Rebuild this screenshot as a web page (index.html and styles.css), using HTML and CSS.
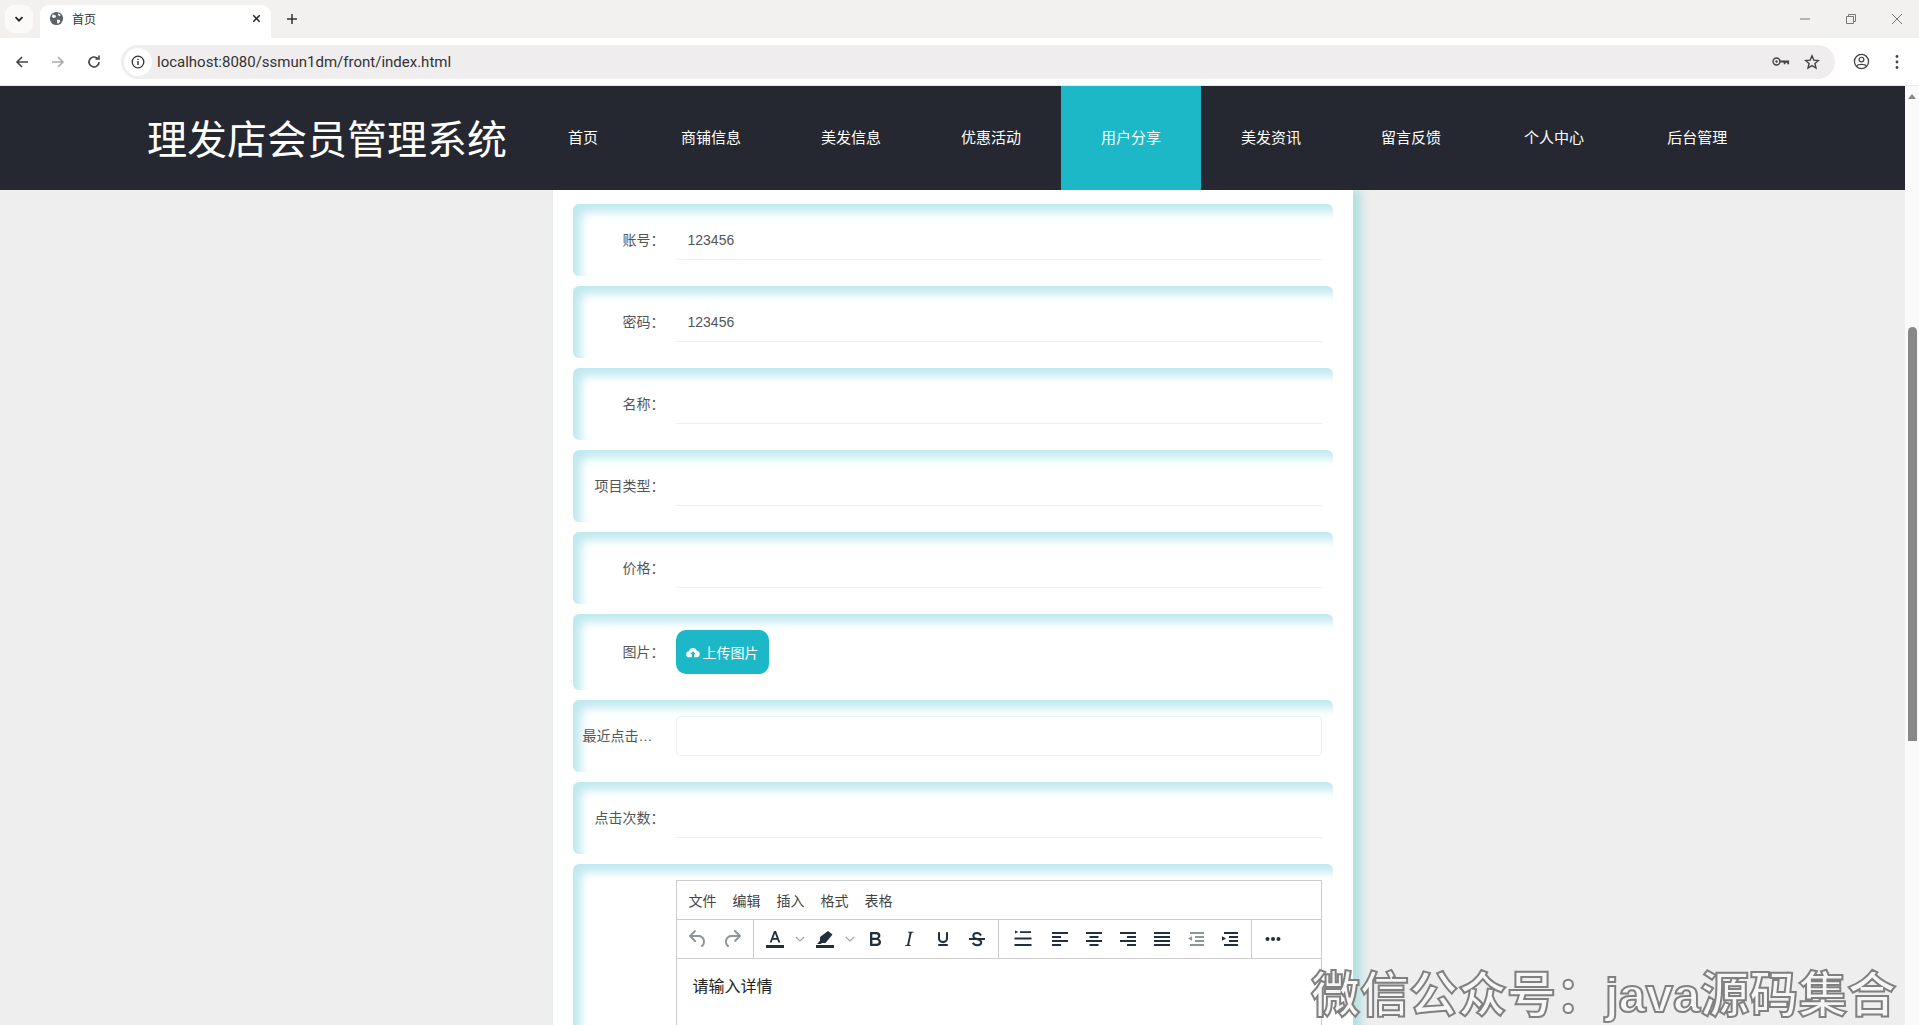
FILE: index.html
```html
<!DOCTYPE html>
<html lang="zh-CN">
<head>
<meta charset="utf-8">
<title>首页</title>
<link rel="stylesheet" href="styles.css">
</head>
<body>
<div class="browser">
  <div class="tabstrip">
    <button class="tab-search"><svg class="ic12" viewBox="0 0 12 12"><path d="M2.5 4.2 6 7.7l3.5-3.5" fill="none" stroke="#222" stroke-width="1.8"/></svg></button>
    <div class="tab">
      <svg class="favicon" viewBox="0 0 16 16"><circle cx="8" cy="8" r="7" fill="#5f6368"/><path d="M4 3.5 7.5 5 7 7 4.5 7.5 3 6ZM8.5 9l3 .5.5 2-2.5 2.3-1-1.8ZM10 2.5l2.5 2-1.5 1L9.500 4Z" fill="#fff"/></svg>
      <span class="tab-title">首页</span>
      <svg class="tab-close" viewBox="0 0 12 12"><path d="M2.500 2.500l7 7m0-7-7 7" stroke="#222" stroke-width="1.700" fill="none"/></svg>
    </div>
    <svg class="tab-new" viewBox="0 0 12 12"><path d="M6 1v10M1 6h10" stroke="#333" stroke-width="1.500" fill="none"/></svg>
    <div class="win-controls">
      <svg class="win-ic" viewBox="0 0 12 12"><path d="M1 6h10" stroke="#777" fill="none"/></svg>
      <svg class="win-ic" viewBox="0 0 12 12"><path d="M1.500 3.500h7v7h-7zM3.500 3.500v-2h7v7h-2" stroke="#777" fill="none"/></svg>
      <svg class="win-ic" viewBox="0 0 12 12"><path d="M1 1l10 10m0-10L1 11" stroke="#777" fill="none"/></svg>
    </div>
  </div>
  <div class="toolbar">
    <svg class="nav-ic" viewBox="0 0 16 16"><path d="M14 8H3M8 3 3 8l5 5" fill="none" stroke="#444" stroke-width="1.600"/></svg>
    <svg class="nav-ic" viewBox="0 0 16 16"><path d="M2 8h11M8 3l5 5-5 5" fill="none" stroke="#aaa" stroke-width="1.600"/></svg>
    <svg class="nav-ic" viewBox="0 0 16 16"><path d="M13 8a5 5 0 1 1-1.500-3.600M13 1.500v3.500H9.500" fill="none" stroke="#444" stroke-width="1.600"/></svg>
    <div class="omnibox">
      <span class="info-badge"><svg class="ic14" viewBox="0 0 14 14"><circle cx="7" cy="7" r="5.800" fill="none" stroke="#333" stroke-width="1.300"/><path d="M7 6v4M7 3.700v1.300" stroke="#333" stroke-width="1.400"/></svg></span>
      <span class="url">localhost:8080/ssmun1dm/front/index.html</span>
      <svg class="key-ic" viewBox="0 0 20 12"><circle cx="5" cy="6" r="3.800" fill="none" stroke="#444" stroke-width="1.600"/><circle cx="5" cy="6" r="1.300" fill="#444"/><path d="M9 5h10v4h-2V7.500h-2V9h-2V7H9z" fill="#444"/></svg>
      <svg class="star-ic" viewBox="0 0 16 16"><path d="m8 1.800 1.800 4.300 4.600.4-3.500 3 1.100 4.500L8 11.600 4 14l1.100-4.500-3.500-3 4.600-.4z" fill="none" stroke="#444" stroke-width="1.400"/></svg>
    </div>
    <svg class="profile-ic" viewBox="0 0 18 18"><circle cx="9" cy="9" r="7.500" fill="none" stroke="#444" stroke-width="1.400"/><circle cx="9" cy="7" r="2.500" fill="none" stroke="#444" stroke-width="1.300"/><path d="M4 14c1-2.500 9-2.500 10 0" fill="none" stroke="#444" stroke-width="1.300"/></svg>
    <svg class="dots-ic" viewBox="0 0 4 16"><circle cx="2" cy="2.500" r="1.400" fill="#444"/><circle cx="2" cy="8" r="1.400" fill="#444"/><circle cx="2" cy="13.500" r="1.400" fill="#444"/></svg>
  </div>
</div>

<div class="viewport">
  <div class="page">
    <header class="site-header">
      <h1 class="site-title">理发店会员管理系统</h1>
      <nav class="site-nav">
        <a class="nav-item nav-first">首页</a>
        <a class="nav-item">商铺信息</a>
        <a class="nav-item">美发信息</a>
        <a class="nav-item">优惠活动</a>
        <a class="nav-item nav-active">用户分享</a>
        <a class="nav-item">美发资讯</a>
        <a class="nav-item">留言反馈</a>
        <a class="nav-item nav-wide">个人中心</a>
        <a class="nav-item nav-wide">后台管理</a>
      </nav>
    </header>
    <main class="panel">
      <div class="form-row"><label class="form-label">账号：</label><div class="field">123456</div></div>
      <div class="form-row"><label class="form-label">密码：</label><div class="field">123456</div></div>
      <div class="form-row"><label class="form-label">名称：</label><div class="field"></div></div>
      <div class="form-row"><label class="form-label">项目类型：</label><div class="field"></div></div>
      <div class="form-row"><label class="form-label">价格：</label><div class="field"></div></div>
      <div class="form-row"><label class="form-label form-label-tall">图片：</label>
        <button class="upload-btn"><svg class="upload-ic" viewBox="0 0 16 12"><path d="M4 11.500a3.500 3.500 0 0 1-.5-7A4.700 4.700 0 0 1 12.500 4a3.800 3.800 0 0 1 0 7.500H9.300V8h2L8 4.500 4.700 8h2v3.500z" fill="#fff"/></svg>上传图片</button>
      </div>
      <div class="form-row"><label class="form-label form-label-left">最近点击…</label><div class="field field-boxed"></div></div>
      <div class="form-row"><label class="form-label">点击次数：</label><div class="field"></div></div>
      <div class="form-row form-row-editor"><label class="form-label"></label>
        <div class="editor">
          <div class="ed-menubar">
            <span class="ed-menu">文件</span><span class="ed-menu">编辑</span><span class="ed-menu">插入</span><span class="ed-menu">格式</span><span class="ed-menu">表格</span>
          </div>
          <div class="ed-toolbar">
            <div class="ed-group ed-group-history">
              <span class="ed-btn"><svg viewBox="0 0 24 24"><path fill="#8f959c" d="M6.400 8H12c3.700 0 6.200 2 6.800 5.100.6 2.700-.4 5.600-2.300 6.800a1 1 0 0 1-1-1.800c1.100-.6 1.800-2.700 1.400-4.600-.5-2.100-2.100-3.500-4.900-3.500H6.400l3.300 3.300a1 1 0 1 1-1.400 1.400l-5-5a1 1 0 0 1 0-1.400l5-5a1 1 0 0 1 1.400 1.400L6.400 8z"/></svg></span>
              <span class="ed-btn"><svg viewBox="0 0 24 24"><path fill="#8f959c" d="M17.600 10H12c-2.800 0-4.400 1.400-4.900 3.500-.4 2 .3 4 1.400 4.600a1 1 0 1 1-1 1.800c-2-1.200-2.900-4.100-2.300-6.800.6-3 3-5.100 6.800-5.100h5.600l-3.300-3.300a1 1 0 1 1 1.400-1.400l5 5a1 1 0 0 1 0 1.400l-5 5a1 1 0 0 1-1.400-1.400l3.300-3.300z"/></svg></span>
            </div>
            <div class="ed-group ed-group-format">
              <span class="ed-btn ed-btn-color"><svg viewBox="0 0 24 24"><path fill="#222f3e" d="M3 18h18v3H3z"/><path fill="#222f3e" d="M11 4h2l4.300 11.500h-2l-1-2.800H9.700l-1 2.800h-2zm-.7 7h3.400L12 6.400z"/></svg></span>
              <span class="ed-chev"><svg viewBox="0 0 10 10"><path d="M.8 3 5 7l4.200-4" fill="none" stroke="#a0a4a9" stroke-width="1.100"/></svg></span>
              <span class="ed-btn ed-btn-color"><svg viewBox="0 0 24 24"><path fill="#222f3e" d="M3 18h18v3H3z"/><path fill="#222f3e" d="M15 4l4.500 3.500-7 8.500H9l-1.300 1H4l3-3.200V10z"/></svg></span>
              <span class="ed-chev ed-chev-last"><svg viewBox="0 0 10 10"><path d="M.8 3 5 7l4.200-4" fill="none" stroke="#a0a4a9" stroke-width="1.100"/></svg></span>
              <span class="ed-btn"><svg viewBox="0 0 24 24"><path fill="#222f3e" d="M7.800 19c-.3 0-.5 0-.6-.2l-.2-.5V5.700c0-.2 0-.4.2-.5l.6-.2h5c1.500 0 2.700.3 3.500 1 .7.600 1.100 1.400 1.100 2.500a3 3 0 0 1-.6 1.900c-.4.600-1 1-1.600 1.200.4.100.9.300 1.300.6s.8.700 1 1.200c.4.400.5 1 .5 1.600 0 1.300-.4 2.300-1.300 3-.8.700-2.100 1-3.800 1H7.800zm5-8.300c.6 0 1.200-.1 1.600-.5.4-.3.600-.7.600-1.300 0-1.100-.8-1.700-2.300-1.700H9.300v3.500h3.500zm.5 6c.7 0 1.300-.1 1.700-.4.400-.4.600-.9.600-1.500s-.2-1-.7-1.400c-.4-.3-1-.4-2-.4H9.400v3.800h3.900z"/></svg></span>
              <span class="ed-btn"><svg viewBox="0 0 24 24"><path fill="#222f3e" d="M16.700 4.700l-.1.900h-.3c-.6 0-1 0-1.400.3-.3.300-.4.600-.5 1.100l-2.100 9.800v.6c0 .5.400.8 1.400.8h.2l-.2.800H8l.2-.8h.2c1.100 0 1.800-.5 2-1.500l2-9.800.1-.5c0-.6-.4-.8-1.400-.8h-.3l.2-.9h5.800z"/></svg></span>
              <span class="ed-btn"><svg viewBox="0 0 24 24"><path fill="#222f3e" d="M16 5c.6 0 1 .4 1 1v5.500a4 4 0 0 1-.4 1.800l-1 1.400a5.300 5.300 0 0 1-5.500 1 5 5 0 0 1-1.600-1c-.5-.4-.8-.9-1.100-1.400a4 4 0 0 1-.4-1.800V6c0-.6.400-1 1-1s1 .4 1 1v5.500c0 .3 0 .6.200 1l.6.700a3.300 3.300 0 0 0 2.200.8 3.400 3.400 0 0 0 2.200-.8c.3-.2.400-.5.600-.8l.2-.9V6c0-.6.400-1 1-1zM8 17h8c.6 0 1 .4 1 1s-.4 1-1 1H8a1 1 0 0 1 0-2z"/></svg></span>
              <span class="ed-btn"><svg viewBox="0 0 24 24"><path fill="#222f3e" d="M4 11h16v2H4z"/><path fill="none" stroke="#222f3e" stroke-width="2" d="M16 8.500C15.300 7.200 14 6 12 6c-2.400 0-3.700 1.300-3.700 2.900 0 1.800 1.700 2.500 3.700 3.100 2.300.7 4.200 1.500 4.200 3.300 0 1.700-1.500 2.900-4 2.900-2.300 0-3.700-1.200-4.400-2.500"/></svg></span>
            </div>
            <div class="ed-group ed-group-align">
              <span class="ed-btn"><svg viewBox="0 0 24 24"><path fill="#222f3e" d="M4 3.500 7.500 5 4 6.500zM9 4.200h11v1.700H9zM3.500 10.500h17v2h-17zM3.500 17h17v2h-17z"/></svg></span>
              <span class="ed-btn ed-btn-first"><svg viewBox="0 0 24 24"><path fill="#222f3e" d="M4 5h16v2H4zM4 9h9v2H4zM4 13h16v2H4zM4 17h9v2H4z"/></svg></span>
              <span class="ed-btn"><svg viewBox="0 0 24 24"><path fill="#222f3e" d="M4 5h16v2H4zM7.500 9h9v2h-9zM4 13h16v2H4zM7.500 17h9v2h-9z"/></svg></span>
              <span class="ed-btn"><svg viewBox="0 0 24 24"><path fill="#222f3e" d="M4 5h16v2H4zM11 9h9v2h-9zM4 13h16v2H4zM11 17h9v2h-9z"/></svg></span>
              <span class="ed-btn"><svg viewBox="0 0 24 24"><path fill="#222f3e" d="M4 5h16v2H4zM4 9h16v2H4zM4 13h16v2H4zM4 17h16v2H4z"/></svg></span>
              <span class="ed-btn"><svg viewBox="0 0 24 24"><path fill="#8f959c" d="M6 5h14v2H6zM11 9h9v2h-9zM11 13h9v2h-9zM6 17h14v2H6zM8 9.200v4.600L4 11.500z"/></svg></span>
              <span class="ed-btn"><svg viewBox="0 0 24 24"><path fill="#222f3e" d="M6 5h14v2H6zM11 9h9v2h-9zM11 13h9v2h-9zM6 17h14v2H6zM4 9.200v4.600l4-2.300z"/></svg></span>
            </div>
            <div class="ed-group ed-group-more">
              <span class="ed-btn"><svg viewBox="0 0 24 24"><circle cx="6.500" cy="12" r="2" fill="#222f3e"/><circle cx="12" cy="12" r="2" fill="#222f3e"/><circle cx="17.500" cy="12" r="2" fill="#222f3e"/></svg></span>
            </div>
          </div>
          <div class="ed-body">请输入详情</div>
        </div>
      </div>
    </main>
  </div>
  <aside class="scrollbar">
    <div class="sb-up"></div>
    <div class="sb-thumb"></div>
  </aside>
</div>
<div class="watermark">微信公众号：java源码集合</div>
</body>
</html>
```

FILE: styles.css
```css
* { box-sizing: border-box; }
html, body { margin: 0; height: 1025px; overflow: hidden; }
body {
  width: 1919px;
  position: relative;
  display: flex;
  flex-direction: column;
  background: #eeeeee;
  font-family: "Liberation Sans", "Noto Sans CJK SC", sans-serif;
  font-size: 14px;
  color: #444;
}
svg { display: block; }

/* browser chrome */
.browser { flex: none; height: 86px; background: #fff; border-bottom: 1px solid #e8e8e8; }
.tabstrip { height: 38px; background: #f3f1ef; display: flex; align-items: flex-start; padding-left: 5px; position: relative; }
.tab-search { width: 28px; height: 28px; margin-top: 5px; border: 0; padding: 0; border-radius: 9px; background: #fbfaf9; display: flex; align-items: center; justify-content: center; }
.ic12 { width: 12px; height: 12px; }
.tab { width: 231px; height: 33px; margin: 5px 0 0 7px; background: #fff; border-radius: 9px 9px 0 0; display: flex; align-items: center; padding: 0 9px 6px 9px; }
.favicon { width: 15px; height: 15px; flex: none; }
.tab-title { margin-left: 8px; font-size: 12px; line-height: 16px; color: #333; flex: 1; font-family: "Noto Sans CJK SC", sans-serif; }
.tab-close { width: 11px; height: 11px; }
.tab-new { width: 12px; height: 12px; margin: 13px 0 0 15px; }
.win-controls { margin-left: auto; margin-top: 13px; display: flex; gap: 34px; padding-right: 16px; }
.win-ic { width: 12px; height: 12px; }

.toolbar { height: 47px; display: flex; align-items: center; padding-left: 14px; }
.nav-ic { width: 16px; height: 16px; margin-right: 20px; flex: none; }
.omnibox { flex: none; width: 1714px; height: 34px; margin-left: -1px; border-radius: 17px; background: #efedee; display: flex; align-items: center; padding-left: 3px; }
.info-badge { width: 28px; height: 28px; border-radius: 50%; background: #fff; display: flex; align-items: center; justify-content: center; }
.ic14 { width: 14px; height: 14px; }
.url { margin-left: 5px; font-size: 15px; color: #333; font-family: "Roboto", sans-serif; flex: 1; }
.key-ic { width: 18px; height: 11px; margin-right: 14px; }
.star-ic { width: 16px; height: 16px; margin-right: 15px; }
.profile-ic { width: 17px; height: 17px; margin-left: 18px; }
.dots-ic { width: 4px; height: 16px; margin-left: 25px; }

/* page */
.viewport { flex: 1; min-height: 0; display: flex; }
.page { flex: 1; min-width: 0; overflow: hidden; }
.scrollbar { flex: none; width: 14px; background: #fafafa; padding: 8px 0 0 3px; }
.sb-up { width: 0; height: 0; margin-left: 0; border: 4.500px solid transparent; border-top: 0; border-bottom: 5px solid #888; }
.sb-thumb { width: 9px; height: 414px; margin-top: 228px; background: #888; border-radius: 5px 5px 0 0; }

.site-header { position: relative; z-index: 2; height: 104px; background: #252830; display: flex; padding-left: 147px; }
.site-title { margin: 0 21px 0 0; font-weight: 400; font-size: 40px; line-height: 102px; color: #fff; white-space: nowrap; font-family: "Noto Sans CJK SC", sans-serif; }
.site-nav { display: flex; }
.nav-item { display: block; padding: 0 40px; height: 104px; line-height: 102px; font-size: 15px; color: #fff; font-family: "Noto Sans CJK SC", sans-serif; white-space: nowrap; }
.nav-first { margin-right: 3px; }
.nav-wide { margin-left: 3px; }
.nav-active { background: #1cb8c8; }

.panel { width: 800px; margin: 0 auto; padding: 14px 20px 0; background: #fff; box-shadow: 8px 0 10px #b0dfe2; min-height: 900px; }
.form-row { display: flex; align-items: flex-start; min-height: 72px; padding: 16px 11px 16px 10px; margin-bottom: 10px; background: #fff; border-radius: 6px; box-shadow: inset 8px 8px 10px #c0e9f0; }
.form-label { flex: none; width: 82px; margin-right: 11px; line-height: 40px; text-align: right; color: #555; white-space: nowrap; font-size: 14px; }
.form-label-tall { line-height: 44px; }
.form-label-left { text-align: left; }
.field { flex: 1; height: 40px; line-height: 40px; padding-left: 12px; border-bottom: 1px solid #eeeeee; color: #555; }
.field-boxed { border: 1px solid #eeeeee; border-radius: 4px; }
.upload-btn { display: flex; align-items: center; height: 44px; width: 93px; padding: 0 0 0 10px; border: 0; border-radius: 10px; background: #1cb8c8; color: #fff; font: inherit; }
.upload-ic { width: 14px; height: 11px; margin-right: 3px; }

/* editor */
.form-row-editor { min-height: 600px; }
.editor { flex: 1; height: 500px; border: 1px solid #cccccc; background: #fff; }
.ed-menubar { height: 39px; display: flex; align-items: center; padding-left: 12px; gap: 16px; border-bottom: 1px solid #cccccc; }
.ed-menu { font-size: 14px; color: #444; }
.ed-toolbar { height: 39px; display: flex; border-bottom: 1px solid #cccccc; }
.ed-group { display: flex; align-items: center; height: 100%; border-right: 1px solid #cccccc; }
.ed-group-history { width: 77px; padding-left: 4px; }
.ed-group-format { width: 245px; padding-left: 1px; }
.ed-group-align { width: 253px; padding-left: 7px; }
.ed-group-more { border-right: 0; padding-left: 4px; }
.ed-btn { flex: none; width: 34px; height: 34px; display: flex; align-items: center; justify-content: center; }
.ed-btn svg { width: 24px; height: 24px; }
.ed-btn-color { width: 40px; }
.ed-chev { flex: none; width: 10px; }
.ed-chev svg { width: 10px; height: 10px; }
.ed-chev-last { margin-right: 3px; }
.ed-btn-first { margin-left: 3px; }
.ed-body { padding: 14px 16px; font-size: 16px; line-height: 24px; color: #222; font-family: "Noto Sans CJK SC", sans-serif; }

/* overlaid watermark */
.watermark {
  position: absolute;
  left: 1311px;
  top: 962px;
  font-family: "Liberation Sans", "Noto Sans CJK SC", sans-serif;
  font-size: 49px;
  line-height: 66px;
  font-weight: 700;
  white-space: nowrap;
  color: #f6f6f6;
  -webkit-text-stroke: 2px #808080;
}
```
